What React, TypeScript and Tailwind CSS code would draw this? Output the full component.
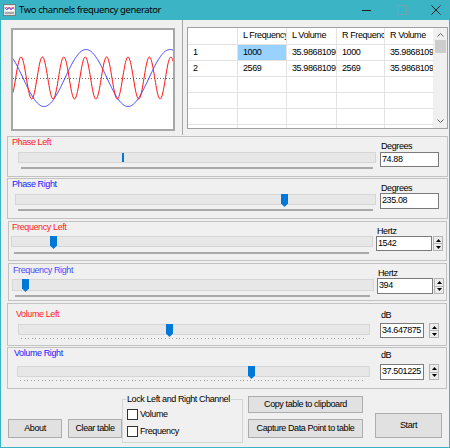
import React from "react";

function wave(amp: number, period: number, x0: number, cy: number) {
  let d = "";
  for (let x = 0; x <= 160; x += 0.5) {
    const y = cy - amp * Math.sin(((x - x0) / period) * Math.PI * 2);
    d += (x === 0 ? "M" : "L") + x.toFixed(1) + " " + y.toFixed(2) + " ";
  }
  return d;
}

function TitleBar() {
  return (
    <div className="h-[20px] bg-[#3bb5c6] flex items-center shrink-0">
      <svg className="ml-[3px]" width="13" height="12" viewBox="0 0 13 12">
        <rect x="0.5" y="0.5" width="12" height="11" fill="#e4e4e4" stroke="#7d7d7d" />
        <rect x="2" y="2" width="9" height="5" fill="#fff" />
        <path d="M2 5 L3.5 3 L5 5 L6.5 3 L8 5 L9.5 3 L11 5" stroke="#ff3030" fill="none" strokeWidth="0.8" />
        <path d="M2 3.5 L4 6 L6 3.5 L8 6 L10.5 3.5" stroke="#4040ff" fill="none" strokeWidth="0.8" />
        <rect x="2" y="8" width="9" height="2" fill="#a8a8a8" />
      </svg>
      <span className="ml-[3px] font-['Noto_Sans',sans-serif] text-[9.5px] leading-[12px] text-black">
        Two channels frequency generator
      </span>
      <div className="ml-auto flex items-center">
        <svg width="9" height="9" viewBox="0 0 9 9">
          <line x1="0" y1="4.5" x2="9" y2="4.5" stroke="#1e1e1e" />
        </svg>
        <svg className="ml-[26px]" width="10" height="10" viewBox="0 0 10 10">
          <rect x="0.5" y="0.5" width="9" height="9" fill="none" stroke="#6aa9b3" />
        </svg>
        <svg className="ml-[24px] mr-[9px]" width="10" height="10" viewBox="0 0 10 10">
          <path d="M0.5 0.5 L9.5 9.5 M9.5 0.5 L0.5 9.5" stroke="#1e1e1e" />
        </svg>
      </div>
    </div>
  );
}

function Chart() {
  return (
    <div className="mt-[8px] ml-[10px] w-[164px] h-[103px] border-2 border-[#a7a7a7] bg-white">
      <svg width="160" height="99" viewBox="0 0 160 99" className="block">
        <line x1="0" y1="48.5" x2="160" y2="48.5" stroke="#6a6a6a" strokeDasharray="1 2" />
        <path d={wave(28.5, 84, 52, 48)} fill="none" stroke="#3c3cff" strokeWidth="1" />
        <path d={wave(21, 21.4, 2.65, 48)} fill="none" stroke="#ff1010" strokeWidth="1" />
      </svg>
    </div>
  );
}

const colW = ["w-[50px]", "w-[49px]", "w-[50px]", "w-[48px]", "w-[48px]"];
const tableRows = [
  ["", "L Frequency", "L Volume", "R Frequency", "R Volume"],
  ["1", "1000", "35.9868109", "1000", "35.9868109"],
  ["2", "2569", "35.9868109", "2569", "35.9868109"],
  ["", "", "", "", ""],
  ["", "", "", "", ""],
  ["", "", "", "", ""],
  ["", "", "", "", ""],
];

function DataTable() {
  return (
    <div className="ml-[4px] mt-[7px] w-[261px] h-[102px] border border-[#a0a0a0] bg-white flex overflow-hidden">
      <div className="flex flex-col">
        {tableRows.map((row, r) => (
          <div key={r} className={`flex shrink-0 ${r === 0 ? "h-[17px]" : "h-[16px]"}`}>
            {row.map((cell, c) => (
              <div
                key={c}
                className={`${colW[c]} h-full flex items-center pl-[5px] whitespace-nowrap overflow-hidden border-b border-[#e3e3e3] ${
                  c < 4 ? "border-r" : ""
                } ${r === 1 && c === 1 ? "bg-[#99d1ff]" : ""}`}
              >
                {cell}
              </div>
            ))}
          </div>
        ))}
      </div>
      <div className="w-[14px] bg-[#f0f0f0] flex flex-col items-center">
        <svg className="mt-[5px]" width="7" height="4" viewBox="0 0 7 4">
          <path d="M0.5 3.5 L3.5 0.5 L6.5 3.5" stroke="#606060" fill="none" />
        </svg>
        <div className="mt-[3px] w-[11px] h-[13px] bg-[#cdcdcd]" />
        <svg className="mt-auto mb-[5px]" width="7" height="4" viewBox="0 0 7 4">
          <path d="M0.5 0.5 L3.5 3.5 L6.5 0.5" stroke="#606060" fill="none" />
        </svg>
      </div>
    </div>
  );
}

function Spin({ cls }: { cls: string }) {
  return (
    <div className={`flex flex-col w-[10px] ${cls}`}>
      <div className="flex-1 flex items-center justify-center bg-[#ececec] border border-[#b4b4b4]">
        <svg width="5" height="3" viewBox="0 0 5 3">
          <path d="M2.5 0 L5 3 H0 Z" fill="#000" />
        </svg>
      </div>
      <div className="flex-1 flex items-center justify-center bg-[#ececec] border border-[#b4b4b4] -mt-[1px]">
        <svg width="5" height="3" viewBox="0 0 5 3">
          <path d="M0 0 H5 L2.5 3 Z" fill="#000" />
        </svg>
      </div>
    </div>
  );
}

type PanelProps = {
  box: string;
  label: string;
  labelCls: string;
  leftW: string;
  trackCls: string;
  thumb: number;
  slim?: boolean;
  ticksCls: string;
  dotted?: boolean;
  unit: string;
  unitCls: string;
  inputRowCls: string;
  inputCls: string;
  value: string;
  spin?: string;
};

function SliderPanel(p: PanelProps) {
  return (
    <div className={`flex shrink-0 border border-[#c2c2c2] ${p.box}`}>
      <div className={`flex flex-col ${p.leftW}`}>
        <span className={`leading-[11px] ${p.labelCls}`}>{p.label}</span>
        <div className={`relative bg-[#e7e7e7] border border-[#d6d6d6] ${p.trackCls}`}>
          {p.slim ? (
            <div className="absolute top-0 w-[2px] h-[9px] bg-[#0078d7]" style={{ left: p.thumb }} />
          ) : (
            <svg className="absolute -top-[1px]" style={{ left: p.thumb }} width="7" height="13" viewBox="0 0 7 13">
              <path d="M0 0 H7 V9.5 L3.5 13 L0 9.5 Z" fill="#0078d7" />
            </svg>
          )}
        </div>
        <div
          className={
            p.dotted
              ? `h-[1px] bg-[repeating-linear-gradient(90deg,#a0a0a0_0_1px,transparent_1px_3.6px)] ${p.ticksCls}`
              : `h-[2px] bg-[#a9a9a9] ${p.ticksCls}`
          }
        />
      </div>
      <div className="flex flex-col">
        <span className={`leading-[11px] ml-[1px] ${p.unitCls}`}>{p.unit}</span>
        <div className={`flex ${p.inputRowCls}`}>
          <div className={`bg-white border border-[#7a7a7a] flex items-center pl-[1px] ${p.inputCls}`}>{p.value}</div>
          {p.spin && <Spin cls={p.spin} />}
        </div>
      </div>
    </div>
  );
}

function Button({ cls, children }: { cls: string; children: React.ReactNode }) {
  return (
    <div className={`shrink-0 bg-[#e1e1e1] border border-[#adadad] flex items-center justify-center ${cls}`}>
      {children}
    </div>
  );
}

function Check({ cls, label }: { cls: string; label: string }) {
  return (
    <div className={`flex items-center ${cls}`}>
      <div className="w-[11px] h-[11px] border border-[#333] bg-white" />
      <span className="ml-[2px] leading-[11px]">{label}</span>
    </div>
  );
}

export default function App() {
  return (
    <div className="w-[450px] h-[448px] bg-[#f0f0f0] flex flex-col overflow-hidden font-['Liberation_Sans',Arial,sans-serif] text-[9px] tracking-[-0.4px] text-black">
      <TitleBar />
      <div className="flex-1 flex flex-col border-x border-b border-[#3bb5c6]">
        {/* chart + table */}
        <div className="flex h-[115px] shrink-0">
          <div className="w-[181px] flex flex-col">
            <Chart />
          </div>
          <div className="w-[1px] bg-[#a8a8a8]" />
          <DataTable />
        </div>

        <SliderPanel
          box="mt-[1px] ml-[6px] w-[441px] h-[41px]"
          label="Phase Left"
          labelCls="text-[#ff1a1a] ml-[4px]"
          leftW="w-[372px]"
          trackCls="ml-[10px] mt-[4px] w-[358px] h-[11px]"
          thumb={103}
          slim
          ticksCls="ml-[13px] mt-[4px] w-[352px]"
          unit="Degrees"
          unitCls="mt-[4px]"
          inputRowCls=""
          inputCls="w-[59px] h-[15px]"
          value="74.88"
        />
        <SliderPanel
          box="mt-[1px] ml-[6px] w-[441px] h-[41px]"
          label="Phase Right"
          labelCls="text-[#1a1aff] ml-[4px]"
          leftW="w-[372px]"
          trackCls="ml-[7px] mt-[4px] w-[361px] h-[11px]"
          thumb={265}
          ticksCls="ml-[10px] mt-[4px] w-[355px]"
          unit="Degrees"
          unitCls="mt-[4px]"
          inputRowCls="-mt-[1px]"
          inputCls="w-[59px] h-[16px]"
          value="235.08"
        />
        <SliderPanel
          box="mt-[2px] ml-[7px] w-[439px] h-[40px]"
          label="Frequency Left"
          labelCls="text-[#ff2020] ml-[3px]"
          leftW="w-[367px]"
          trackCls="ml-[2px] mt-[3px] w-[362px] h-[11px]"
          thumb={38}
          ticksCls="ml-[5px] mt-[5px] w-[355px]"
          unit="Hertz"
          unitCls="mt-[4px]"
          inputRowCls="-mt-[1px]"
          inputCls="w-[56px] h-[15px]"
          value="1542"
          spin="ml-[1px] h-[15px]"
        />
        <SliderPanel
          box="mt-[2px] ml-[7px] w-[439px] h-[38px]"
          label="Frequency Right"
          labelCls="text-[#4b4bff] ml-[4px] mt-[1px]"
          leftW="w-[368px]"
          trackCls="ml-[3px] mt-[3px] w-[362px] h-[12px]"
          thumb={9}
          ticksCls="ml-[6px] mt-[4px] w-[355px]"
          unit="Hertz"
          unitCls="mt-[4px]"
          inputRowCls="-mt-[1px]"
          inputCls="w-[56px] h-[16px]"
          value="394"
          spin="ml-[1px] h-[16px]"
        />
        <SliderPanel
          box="mt-[2px] ml-[6px] w-[440px] h-[43px]"
          label="Volume Left"
          labelCls="text-[#ff2020] ml-[8px] mt-[5px]"
          leftW="w-[372px]"
          trackCls="ml-[10px] mt-[4px] w-[352px] h-[11px]"
          thumb={147}
          ticksCls="ml-[13px] mt-[3px] w-[346px]"
          dotted
          unit="dB"
          unitCls="mt-[6px]"
          inputRowCls="mt-[2px]"
          inputCls="w-[44px] h-[15px]"
          value="34.647875"
          spin="ml-[5px] h-[15px]"
        />
        <SliderPanel
          box="mt-[1px] ml-[6px] w-[440px] h-[42px]"
          label="Volume Right"
          labelCls="text-[#1a1aff] ml-[6px]"
          leftW="w-[372px]"
          trackCls="ml-[9px] mt-[7px] w-[353px] h-[11px]"
          thumb={230}
          ticksCls="ml-[12px] mt-[3px] w-[346px]"
          dotted
          unit="dB"
          unitCls="mt-[2px]"
          inputRowCls="mt-[3px]"
          inputCls="w-[44px] h-[16px]"
          value="37.501225"
          spin="ml-[5px] h-[16px]"
        />

        {/* bottom buttons */}
        <div className="flex items-start flex-1">
          <Button cls="ml-[7px] mt-[30px] w-[54px] h-[19px]">About</Button>
          <Button cls="ml-[6px] mt-[30px] w-[54px] h-[19px]">Clear table</Button>
          <div className="mt-[10px] w-[121px] h-[44px] border border-[#d5d5d5] flex flex-col shrink-0">
            <span className="-mt-[6px] ml-[3px] px-[1px] bg-[#f0f0f0] w-fit leading-[11px] whitespace-nowrap">
              Lock Left and Right Channel
            </span>
            <Check cls="ml-[4px] mt-[4px]" label="Volume" />
            <Check cls="ml-[4px] mt-[6px]" label="Frequency" />
          </div>
          <div className="ml-[5px] flex flex-col">
            <Button cls="mt-[7px] w-[115px] h-[17px]">Copy table to clipboard</Button>
            <Button cls="mt-[6px] w-[115px] h-[19px]">Capture Data Point to table</Button>
          </div>
          <Button cls="ml-[12px] mt-[24px] w-[67px] h-[25px]">Start</Button>
        </div>
      </div>
    </div>
  );
}
